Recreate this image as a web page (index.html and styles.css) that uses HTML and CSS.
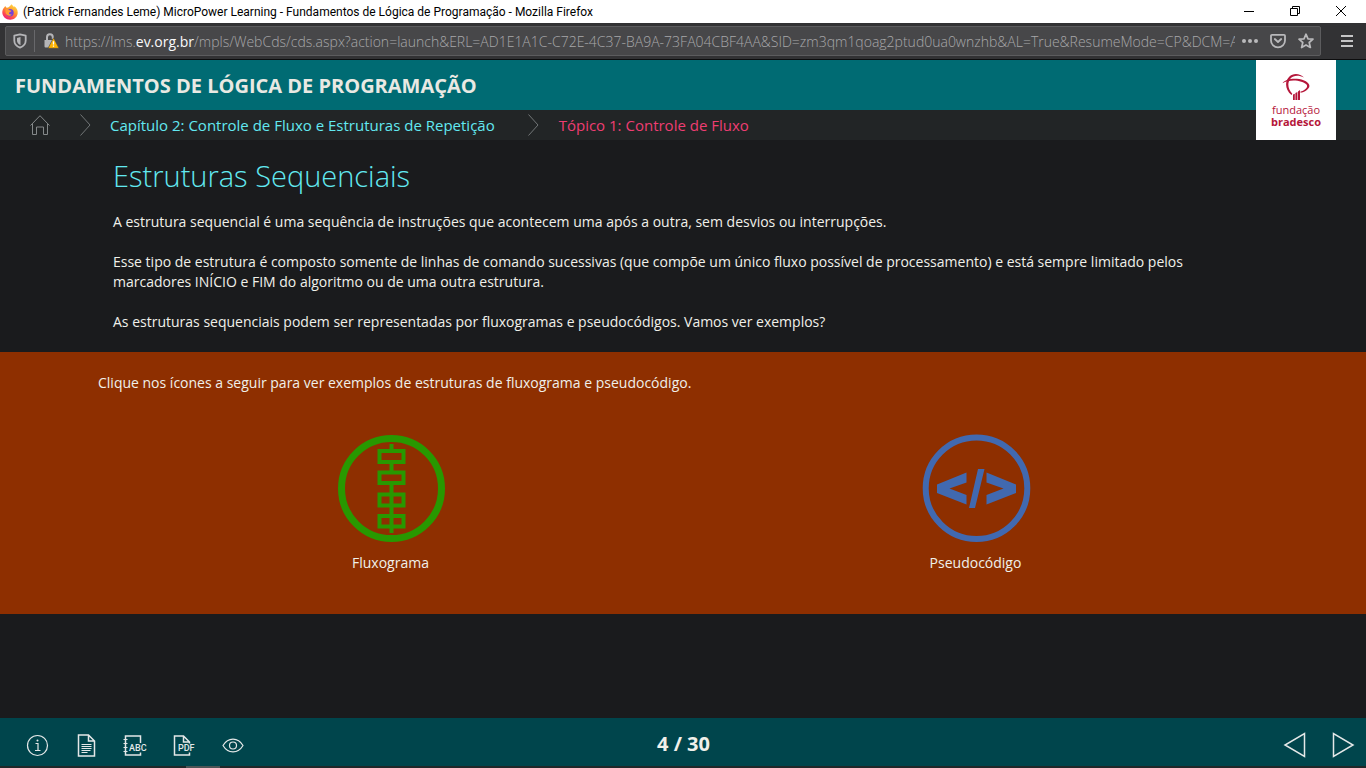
FILE: index.html
```html
<!DOCTYPE html>
<html lang="pt-BR">
<head>
<meta charset="utf-8">
<title>MicroPower Learning - Fundamentos de Lógica de Programação</title>
<link rel="stylesheet" href="styles.css">
</head>
<body>
<div class="window">
  <div class="titlebar">
    <svg class="firefox" viewBox="0 0 16 16" width="16" height="16" aria-hidden="true">
      <defs>
        <linearGradient id="flame" x1="0.8" y1="0" x2="0.2" y2="1">
          <stop offset="0" stop-color="#ffe14a"/><stop offset="0.4" stop-color="#ff9a2e"/><stop offset="0.75" stop-color="#ff4451"/><stop offset="1" stop-color="#e31587"/>
        </linearGradient>
      </defs>
      <path fill="url(#flame)" d="M2.6 3.1 3.2 2l1.4 1.8 1.6-.2C7.500 2.600 8.600 1.700 9.500.3c1 1.200 1.700 2 2.500 2.700l.6-.7C14.700 4 15.900 6.500 15.700 9c-.3 4-3.500 6.700-7.500 6.700C3.900 15.700.4 12.600.3 8.500.3 6.500 1 4.500 2.600 3.100z"/>
      <circle cx="8" cy="8.700" r="3.700" fill="#7541d8"/>
      <path fill="#ff9d35" d="M3.500 5.500c1.500-.8 3-.3 4 .8 1 .2 1.800.4 2 .8-.6.900-2 .8-2.500 1.900-.2 1.200 1.200 1.900 2.800 1.200-1 1.800-3.500 2-5 .6C3.500 9.500 3.200 7.500 3.500 5.500z"/>
    </svg>
    <span class="window-title">(Patrick Fernandes Leme) MicroPower Learning - Fundamentos de Lógica de Programação - Mozilla Firefox</span>
    <div class="window-controls">
      <button type="button" aria-label="Minimizar"><svg viewBox="0 0 12 12" width="12" height="12"><path d="M1 6.500h10"/></svg></button>
      <button type="button" aria-label="Restaurar"><svg viewBox="0 0 12 12" width="12" height="12"><path d="M1.500 3.500h7v7h-7zM3.500 3.500v-2h7v7h-2"/></svg></button>
      <button type="button" aria-label="Fechar"><svg viewBox="0 0 12 12" width="12" height="12"><path d="m1 1 10 10M11 1 1 11"/></svg></button>
    </div>
  </div>

  <div class="toolbar">
    <div class="address">
      <button type="button" class="shield" aria-label="Proteção"><svg viewBox="0 0 16 16" width="16" height="16"><path fill="none" stroke="#b5b5b8" stroke-width="1.800" stroke-linejoin="round" d="M8 1.300 2.300 2.700v4.800c0 3.400 2.200 5.800 5.700 7.200 3.500-1.400 5.700-3.800 5.700-7.200V2.700z"/><path fill="#b5b5b8" d="M8.500 4 5 4.900v2.600c0 2 1.200 3.600 3.500 4.700z"/></svg></button>
      <button type="button" class="lock" aria-label="Conexão"><svg viewBox="0 0 16 16" width="16" height="16"><path fill="none" stroke="#b5b5b8" stroke-width="2" d="M4 8V4.200a2.900 2.900 0 0 1 5.800 0V6"/><path fill="#b5b5b8" d="M1.500 7h9v7.500h-8a1 1 0 0 1-1-1z"/><path fill="#ffb400" stroke="#48484a" stroke-width=".6" stroke-linejoin="round" d="M10.500 4.800 16 15.300H5z"/><path stroke="#fff" stroke-width="1.300" d="M10.500 8.300v3.300M10.500 12.500v1.300"/></svg></button>
      <div class="url" role="textbox" aria-label="Endereço" aria-readonly="true" tabindex="0">https://lms.<span class="domain">ev.org.br</span>/mpls/WebCds/cds.aspx?action=launch&amp;ERL=AD1E1A1C-C72E-4C37-BA9A-73FA04CBF4AA&amp;SID=zm3qm1qoag2ptud0ua0wnzhb&amp;AL=True&amp;ResumeMode=CP&amp;DCM=A</div>
      <div class="address-actions">
        <button type="button" aria-label="Mais ações"><svg viewBox="0 0 16 16" width="16" height="16" fill="#b9b9bb"><circle cx="2" cy="8" r="2"/><circle cx="8" cy="8" r="2"/><circle cx="14" cy="8" r="2"/></svg></button>
        <button type="button" aria-label="Salvar no Pocket"><svg viewBox="0 0 16 16" width="16" height="16" fill="none" stroke="#b9b9bb" stroke-width="1.800" stroke-linejoin="round" stroke-linecap="round"><path d="M2 1.800h12a1 1 0 0 1 1 1V7.500a7 6.800 0 0 1-14 0V2.800a1 1 0 0 1 1-1zM4.800 6 8 9l3.200-3"/></svg></button>
        <button type="button" aria-label="Favoritar"><svg viewBox="0 0 16 16" width="16" height="16" fill="none" stroke="#b9b9bb" stroke-width="1.700" stroke-linejoin="round"><path d="m8 1.200 2 4.600 5 .4-3.800 3.300 1.200 5L8 11.900l-4.400 2.600 1.200-5L1 6.200l5-.4z"/></svg></button>
      </div>
    </div>
    <button type="button" class="menu" aria-label="Menu"><svg viewBox="0 0 12 12" width="12" height="12"><path stroke="#c5c5c6" stroke-width="2" d="M0 1h12M0 6h12M0 11h12"/></svg></button>
  </div>

  <header class="course-header">
    <h1>FUNDAMENTOS DE LÓGICA DE PROGRAMAÇÃO</h1>
    <a class="brand" href="#" aria-label="Fundação Bradesco">
      <svg viewBox="0 0 28 28" width="28" height="28" aria-hidden="true">
        <path fill="#b5163a" d="M22 4.500C18 .3 11-.2 7.200 3.800 2.500 8.500 3 17 9.500 22l.8-1.300C5.500 16 5.300 9.500 8.500 5.500c3-3.500 8.500-3.500 13.500-1z"/>
        <path fill="#b5163a" d="M.5 10.300C4 5 15 5 21.500 7.200c4.500 1.500 7.500 5 5 8-2 2.500-4.500 4-8 4.600v-1.200c4.500-1.500 8-4.500 6-7C21 7.500 8 5.500.5 10.300z"/>
        <path fill="#b5163a" d="M11 21.500l1.800-.8V27H11zM13.400 20l2-1v8h-2zM16 18.500l2-1.500v10h-2z"/>
      </svg>
      <span>fundação</span>
      <strong>bradesco</strong>
    </a>
  </header>

  <nav class="breadcrumb" aria-label="Navegação">
    <a class="home" href="#" aria-label="Início"><svg viewBox="0 0 20 20" width="20" height="20" fill="none" stroke="#85898a"><path d="M.5 10.500 10 .7l9.500 9.800M2.500 9v10.500h4V12h7v7.500h4V9"/></svg></a>
    <svg class="chevron" viewBox="0 0 11 22" width="11" height="22" aria-hidden="true"><path d="m.5.5 9.500 10.500L.5 21.500"/></svg>
    <a class="chapter" href="#">Capítulo 2: Controle de Fluxo e Estruturas de Repetição</a>
    <svg class="chevron" viewBox="0 0 11 22" width="11" height="22" aria-hidden="true"><path d="m.5.5 9.500 10.500L.5 21.500"/></svg>
    <a class="topic" href="#" aria-current="page">Tópico 1: Controle de Fluxo</a>
  </nav>

  <main>
    <article class="lesson">
      <h2>Estruturas Sequenciais</h2>
      <p>A estrutura sequencial é uma sequência de instruções que acontecem uma após a outra, sem desvios ou interrupções.</p>
      <p>Esse tipo de estrutura é composto somente de linhas de comando sucessivas (que compõe um único fluxo possível de processamento) e está sempre limitado pelos marcadores INÍCIO e FIM do algoritmo ou de uma outra estrutura.</p>
      <p>As estruturas sequenciais podem ser representadas por fluxogramas e pseudocódigos. Vamos ver exemplos?</p>
    </article>
    <section class="examples">
      <p>Clique nos ícones a seguir para ver exemplos de estruturas de fluxograma e pseudocódigo.</p>
      <div class="options">
        <button type="button">
          <svg viewBox="0 0 110 108" width="110" height="108" fill="none" stroke="#289800" aria-hidden="true">
            <circle cx="55.500" cy="54.500" r="50" stroke-width="7"/>
            <path stroke-width="4" d="M43.500 17h24v11h-24zM43.500 38.500h24v10.500h-24zM43.500 60.500h24v11h-24zM43.500 82h24v10.500h-24zM55.500 10v7M55.500 28v10.500M55.500 49v50"/>
          </svg>
          <span>Fluxograma</span>
        </button>
        <button type="button">
          <svg viewBox="0 0 110 108" width="110" height="108" aria-hidden="true">
            <circle cx="55.500" cy="54.200" r="50.800" stroke-width="6" fill="none" stroke="#4169b0"/>
            <path fill="#4169b0" d="M45.500 38.500v10l-17 6 17 6.500v9.500L16 59v-8.500zM57 35h6.500L54 74h-6zM65.500 38.500v10l17 6-17 6.500v9.500L95 59v-8.500z"/>
          </svg>
          <span>Pseudocódigo</span>
        </button>
      </div>
    </section>
  </main>

  <footer>
    <div class="player">
      <div class="tools">
        <button type="button" aria-label="Informações"><svg viewBox="0 0 24 24" width="24" height="24"><circle cx="12.500" cy="12.500" r="10"/><path d="M10.500 10.500H13V17M10 17.500h5.500"/><circle cx="12.500" cy="7.500" r="1" fill="#e4e8e8" stroke="none"/></svg></button>
        <button type="button" aria-label="Texto"><svg viewBox="0 0 24 24" width="24" height="24"><path stroke-width="1.500" d="M4.500 2h10l6 6v15h-16zM14.500 2v6h6"/><path d="M7.500 11.500h10M7.500 13.500h10M7.500 15.500h10M7.500 17.500h9M7.500 19.500h6"/></svg></button>
        <button type="button" aria-label="Glossário"><svg viewBox="0 0 24 24" width="24" height="24"><path stroke-width="1.500" d="M17.500 10V3h-15v19h15v-2.500"/><path d="M.5 6.500h4M.5 10.500h4M.5 14.500h4M.5 18.500h4"/><text x="6" y="18">ABC</text></svg></button>
        <button type="button" aria-label="PDF"><svg viewBox="0 0 24 24" width="24" height="24"><path stroke-width="1.500" d="M17.500 10.500V9l-6-6h-9v19h15v-2.500M11.500 3v6h6"/><text x="6" y="18">PDF</text></svg></button>
        <button type="button" aria-label="Visualização"><svg viewBox="0 0 24 24" width="24" height="24"><path d="M2 12.500c5-8.500 15-8.500 20 0-5 8.500-15 8.500-20 0z"/><circle cx="12" cy="12.500" r="3.500"/></svg></button>
      </div>
      <div class="page-number">4 / 30</div>
      <div class="pager">
        <button type="button" aria-label="Anterior"><svg viewBox="0 0 24 26" width="24" height="26"><path stroke-width="1.500" d="M21.500 1.500v23L2 13z"/></svg></button>
        <button type="button" aria-label="Próxima"><svg viewBox="0 0 24 26" width="24" height="26"><path stroke-width="1.500" d="M2.500 1.500v23L22 13z"/></svg></button>
      </div>
    </div>
    <div class="bottom-edge"><span></span></div>
  </footer>
</div>
</body>
</html>
```
FILE: styles.css
```css
* { box-sizing: border-box; }
body { margin: 0; font-family: "Open Sans", "Noto Sans", sans-serif; font-size: 14px; line-height: 20px; color: #f0f0ea; background: #1a1b1d; }
button { padding: 0; border: 0; background: none; color: inherit; font: inherit; cursor: pointer; }
button svg { display: block; }
a { text-decoration: none; }
h1, h2, p { margin: 0; }
.window { display: flex; flex-direction: column; min-height: 100vh; }

.titlebar { display: flex; align-items: center; height: 23px; padding: 0 19px 0 2px; background: #fff; color: #000; }
.window-title { flex: 1; margin-left: 5px; font-family: Roboto, sans-serif; font-size: 12px; white-space: nowrap; }
.window-controls { display: flex; gap: 34px; padding-bottom: 2px; }
.window-controls svg { fill: none; stroke: #000; }

.toolbar { display: flex; align-items: center; height: 37px; padding: 0 13px 0 5px; background: #323234; border-bottom: 1px solid #0d0d0e; }
.address { display: flex; flex: 1; align-items: center; min-width: 0; height: 30px; padding: 0 6px; border: 1px solid #5c5c5e; border-radius: 2px; background: #474749; }
.shield { padding-right: 6px; border-right: 1px solid #68686b; height: 22px; }
.lock { margin: 0 6px 0 8px; }
.url { flex: 1; min-width: 0; overflow: hidden; white-space: nowrap; padding-top: 1px; font-size: 14px; font-weight: 300; color: #a8a8aa; }
.domain { font-weight: 400; color: #f9f9fa; }
.address-actions { display: flex; gap: 12px; margin-left: 7px; }
.menu { margin-left: 20px; }

.course-header { position: relative; display: flex; align-items: center; height: 50px; padding: 2px 15px 0; background: #006b73; }
h1 { font-size: 20px; line-height: 28px; font-weight: 700; color: #e9e9e3; }
.brand { position: absolute; z-index: 1; top: 0; right: 30px; display: flex; flex-direction: column; align-items: center; width: 80px; height: 80px; padding-top: 13px; background: #fff; color: #b5163a; font-size: 11px; line-height: 12px; }
.brand span { margin-top: 3px; }

.breadcrumb { display: flex; align-items: center; height: 30px; padding: 0 30px; background: #222526; font-size: 15px; }
.home svg { display: block; }
.chevron { fill: none; stroke: #727677; }
.home + .chevron { margin: 0 19px 0 30px; }
.chapter { margin-right: 33px; color: #62e9f1; }
.topic { margin-left: 20px; color: #ee3d72; }

main { flex: 1; }
.lesson { padding: 16px 113px 20px; }
h2 { margin-bottom: 16px; font-size: 29px; line-height: 40px; font-weight: 300; color: #62e9f1; }
.lesson p + p { margin-top: 20px; }
.examples { padding: 21px 98px 41px; background: #8e2f00; }
.options { display: grid; grid-template-columns: 1fr 1fr; margin-top: 41px; }
.options button { display: flex; flex-direction: column; align-items: center; gap: 11px; justify-self: center; }

.player { display: grid; grid-template-columns: 1fr auto 1fr; align-items: center; height: 48px; padding: 0 11px 0 12px; background: #00454c; }
.player svg { fill: none; stroke: #e4e8e8; stroke-width: 1.200; }
.player text { fill: #e4e8e8; stroke: none; font-family: Roboto, sans-serif; font-size: 9px; font-weight: 500; }
.tools { display: flex; gap: 25px; margin-left: 13px; padding-top: 6px; }
.page-number { padding-top: 4px; font-size: 20px; font-weight: 700; color: #f0f0ea; }
.pager { display: flex; gap: 24px; justify-self: end; padding-top: 6px; }
.bottom-edge { height: 2px; padding-left: 186px; background: #202829; }
.bottom-edge span { display: block; width: 34px; height: 2px; background: #4d5556; }
```
